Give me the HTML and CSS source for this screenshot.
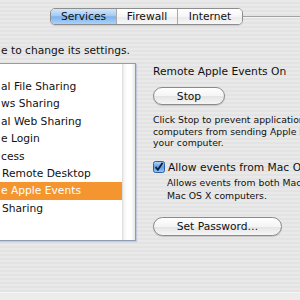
FILE: index.html
```html
<!DOCTYPE html>
<html lang="en">
<head>
    <meta charset="UTF-8">
    <title>Sharing</title>
    <link rel="stylesheet" href="styles.css">
</head>
<body>

    <div class="pane">
        <!-- tabs -->
        <div class="tabbar">
            <div class="seg">
                <span class="tab tab-services on">Services</span><span class="tab tab-firewall">Firewall</span><span class="tab tab-internet">Internet</span>
            </div>
            <div class="tabline"></div>
        </div>

        <p class="hint">e to change its settings.</p>

        <div class="columns">
            <!-- service list -->
            <div class="list">
                <ul class="rows">
                    <li>al File Sharing</li>
                    <li>ws Sharing</li>
                    <li>al Web Sharing</li>
                    <li>e Login</li>
                    <li>cess</li>
                    <li class="shift">Remote Desktop</li>
                    <li class="selected">e Apple Events</li>
                    <li class="shift">Sharing</li>
                </ul>
                <div class="track"></div>
            </div>

            <!-- details of the selected service -->
            <div class="detail">
                <div class="status">Remote Apple Events On</div>
                <button class="button stop-btn">Stop</button>
                <p class="desc">Click Stop to prevent applications on other<br>computers from sending Apple Events to<br>your computer.</p>

                <label class="check-row">
                    <svg class="checkbox" width="12" height="12" viewBox="0 0 12 12">
                        <defs>
                            <linearGradient id="cb" x1="0" y1="0" x2="0" y2="1">
                                <stop offset="0" stop-color="#b9d7f6"/>
                                <stop offset="0.5" stop-color="#5d9ce4"/>
                                <stop offset="1" stop-color="#9cc8f4"/>
                            </linearGradient>
                        </defs>
                        <rect x="0.5" y="0.5" width="11" height="11" rx="2" fill="url(#cb)" stroke="#2f5f9e"/>
                        <path d="M2.6 6.2 L4.9 8.8 L9.6 1.8" fill="none" stroke="#0d1f3a" stroke-width="1.8"/>
                    </svg>
                    <span>Allow events from Mac OS 9 computers</span>
                </label>
                <p class="note">Allows events from both Mac OS 9 and<br>Mac OS X computers.</p>

                <button class="button pass-btn">Set Password…</button>
            </div>
        </div>
    </div>

    <div class="footer"></div>

</body>
</html>
```

FILE: styles.css
```css
body {
    margin: 0;
    width: 300px;
    height: 300px;
    overflow: hidden;
    display: flex;
    flex-direction: column;
    font-family: "DejaVu Sans", "Noto Sans", sans-serif;
    font-size: 10.7px;
    color: #111;
    background: repeating-linear-gradient(to bottom, #e9e9e9 0, #e9e9e9 2px, #e3e3e3 2px, #e3e3e3 4px);
}

.pane {
    flex: 1;
    white-space: nowrap;
    overflow: hidden;
}

.tabbar {
    display: flex;
    margin-top: 8px;
    padding-left: 50px;
    height: 17px;
}

.seg {
    display: flex;
    flex: none;
    height: 17px;
    border: 1px solid #8d8d8d;
    border-radius: 5px;
    box-sizing: border-box;
    overflow: hidden;
    box-shadow: 0 1px 1px rgba(0, 0, 0, 0.12);
}

.tab {
    display: flex;
    align-items: center;
    justify-content: center;
    background: linear-gradient(to bottom, #ffffff 0%, #f6f6f6 50%, #e9e9e9 51%, #f7f7f7 100%);
    border-left: 1px solid #a9a9a9;
    box-sizing: border-box;
}

.tab-services { width: 65px; border-left: none; }
.tab-firewall { width: 61px; }
.tab-internet { width: 65px; }

.tab.on {
    background: linear-gradient(to bottom, #d3e6fa 0%, #a3cbf3 45%, #7eb2ec 52%, #a9d2f8 100%);
}

.tabline {
    flex: 1;
    align-self: center;
    height: 1px;
    background: #a2a2a2;
    border-bottom: 1px solid #f4f4f4;
}

.hint {
    margin: 19px 0 0;
    line-height: 13px;
    padding-left: 1px;
}

.columns {
    display: flex;
    margin-top: 6px;
}

.list {
    display: flex;
    flex: none;
    width: 140px;
    height: 178px;
    margin-left: -4px;
    box-sizing: border-box;
    border: 1px solid #8e9db6;
    background: #fff;
    box-shadow: 1px 1px 1px rgba(120, 150, 200, 0.35);
}

.rows {
    flex: 1;
    list-style: none;
    margin: 0;
    padding: 14px 0 0;
}

.rows li {
    height: 17.4px;
    line-height: 17.4px;
    padding-left: 4px;
}

.rows li.shift {
    padding-left: 5px;
}

.rows li.selected {
    background: #f4952f;
    color: #fff;
}

.track {
    width: 13px;
    background: linear-gradient(to right, #d9d9d9 0, #f4f4f4 2px, #ffffff 40%, #ffffff 70%, #e6e6e6 100%);
}

.detail {
    flex: none;
    margin-left: 17px;
}

.status {
    margin-top: 2px;
    line-height: 13px;
}

.button {
    display: block;
    font-family: inherit;
    font-size: 10.7px;
    color: #111;
    padding: 0;
    border: 1px solid #8a8a8a;
    border-radius: 10px;
    background: linear-gradient(to bottom, #ffffff 0%, #f4f4f4 50%, #e4e4e4 51%, #f6f6f6 100%);
    box-shadow: 0 1px 1px rgba(0, 0, 0, 0.15);
}

.stop-btn {
    width: 72px;
    height: 18px;
    margin-top: 9px;
}

.desc {
    margin: 9px 0 0;
    font-size: 9.3px;
    line-height: 11.7px;
}

.check-row {
    display: flex;
    align-items: center;
    gap: 3px;
    height: 14px;
    margin-top: 11px;
}

.checkbox {
    flex: none;
}

.note {
    margin: 2px 0 0 14px;
    font-size: 9.3px;
    line-height: 13px;
}

.pass-btn {
    width: 129px;
    height: 19px;
    margin-top: 15px;
}

.footer {
    flex: none;
    height: 7px;
    border-top: 1px solid #f7f7f7;
    background: #ececec;
}
```
